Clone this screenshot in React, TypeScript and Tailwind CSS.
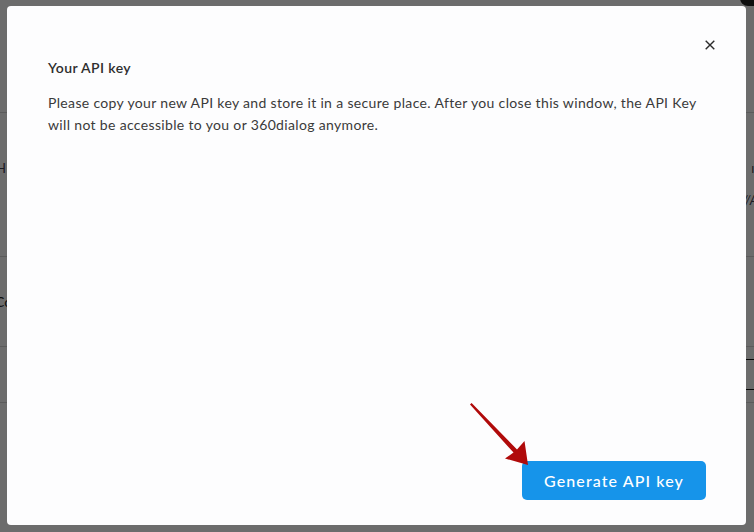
import React from "react";

export default function App() {
  return (
    <div
      className="relative h-[532px] w-[754px] overflow-hidden bg-white"
      style={{ fontFamily: "Lato, 'Noto Sans', sans-serif" }}
    >
      {/* background page (under overlay) */}
      <div className="flex flex-col">
        <div className="h-[113px] border-b border-[#d8d8d8]" />
        <div className="flex h-[144px] flex-col justify-center border-b border-[#d8d8d8]">
          <div className="flex justify-between text-[13px] text-[#445]">
            <span className="-ml-[4px]">H</span>
            <span className="-mr-[6px]">ıs</span>
          </div>
          <div className="mt-[12px] flex justify-end text-[13px] italic text-[#445]">
            <span className="-mr-[4px]">//A</span>
          </div>
        </div>
        <div className="flex h-[90px] items-center border-b border-[#d8d8d8] text-[14px] text-[#222]">
          <span className="-ml-[5px]">Co</span>
        </div>
        <div className="flex h-[56px] items-start justify-end border-b border-[#d8d8d8]">
          <div className="-mr-[40px] mt-[12px] flex h-[31px] w-[90px] items-center border-y border-[#111] pl-[8px] text-[14px] text-[#222]">
            SE
          </div>
        </div>
      </div>
      <div className="absolute right-[-8px] top-[-10px] h-[16px] w-[22px] rounded-full bg-[#222]" />

      {/* overlay */}
      <div className="absolute inset-0 flex bg-black/[0.575] pb-[7px] pl-[7px] pr-[8px] pt-[6px]">
        <div className="relative flex flex-1 flex-col rounded-[4px] bg-[#fdfdfe] pb-[25px] pl-[41px] pr-[30px] pt-[52px]">
          <button className="absolute right-[24px] top-[27px] flex h-[24px] w-[24px] items-center justify-center">
            <svg width="10" height="10" viewBox="0 0 10 10">
              <path d="M0.7 0.7 L9.3 9.3 M9.3 0.7 L0.7 9.3" stroke="#2b2b2b" strokeWidth="1.4" />
            </svg>
          </button>
          <h2 className="text-[14px] font-semibold leading-[20px] tracking-[0.4px] text-[#2e2e2e]">Your API key</h2>
          <p className="mt-[14px] whitespace-nowrap text-[14px] leading-[22px] tracking-[0.34px] text-[#3a3a3a]">
            Please copy your new API key and store it in a secure place. After you close this window, the API Key
            <br />
            will not be accessible to you or 360dialog anymore.
          </p>
          <div className="flex-1" />
          <div className="flex justify-end pr-[10px]">
            <button className="h-[39px] w-[184px] rounded-[5px] bg-[#1694ea] text-[16px] font-medium tracking-[1.1px] text-white">
              Generate API key
            </button>
          </div>
          <svg
            className="absolute left-[458px] top-[392px]"
            width="70"
            height="72"
            viewBox="465 398 70 72"
          >
            <path
              d="M470 404.6 L471.6 403 L517 449.5 L524.5 441 L528 465 L505 458.5 L513.5 452.5 Z"
              fill="#b00a0a"
            />
          </svg>
        </div>
      </div>
    </div>
  );
}
